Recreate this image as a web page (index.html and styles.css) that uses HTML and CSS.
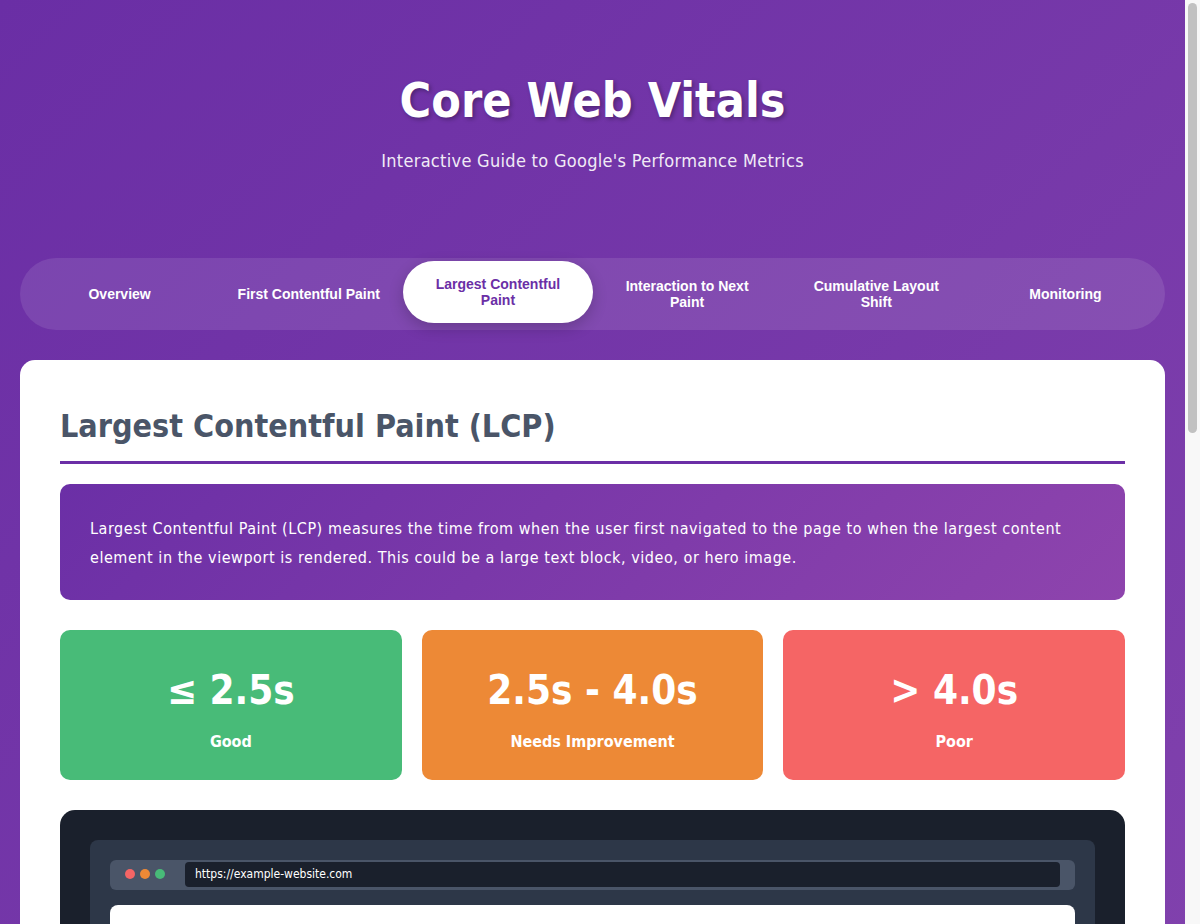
FILE: index.html
```html
<!DOCTYPE html>
<html lang="en">
  <head>
    <meta charset="UTF-8" />
    <meta name="viewport" content="width=device-width, initial-scale=1.0" />
    <title>Core Web Vitals</title>
    <link rel="stylesheet" href="styles.css">
  </head>
  <body>
    <div class="container">
      <header class="header">
        <h1>Core Web Vitals</h1>
        <p class="subtitle">Interactive Guide to Google's Performance Metrics</p>
      </header>

      <nav class="tabs">
        <button class="tab">Overview</button>
        <button class="tab">First Contentful Paint</button>
        <button class="tab active">Largest Contentful Paint</button>
        <button class="tab">Interaction to Next Paint</button>
        <button class="tab">Cumulative Layout Shift</button>
        <button class="tab">Monitoring</button>
      </nav>

      <main class="panel">
        <h2>Largest Contentful Paint (LCP)</h2>

        <div class="intro">
          Largest Contentful Paint (LCP) measures the time from when the user first navigated to the page to when the largest content
          element in the viewport is rendered. This could be a large text block, video, or hero image.
        </div>

        <div class="thresholds">
          <div class="threshold good">
            <div class="value">&le; 2.5s</div>
            <div class="label">Good</div>
          </div>
          <div class="threshold needs">
            <div class="value">2.5s - 4.0s</div>
            <div class="label">Needs Improvement</div>
          </div>
          <div class="threshold poor">
            <div class="value">&gt; 4.0s</div>
            <div class="label">Poor</div>
          </div>
        </div>

        <div class="demo">
          <div class="browser">
            <div class="browser-bar">
              <span class="dot red"></span>
              <span class="dot orange"></span>
              <span class="dot green"></span>
              <div class="url">https://example-website.com</div>
            </div>
            <div class="viewport">
              <div class="hero">Hero Image</div>
              <div class="line"></div>
              <div class="line short"></div>
            </div>
          </div>
        </div>
      </main>
    </div>
  </body>
</html>
```

FILE: styles.css
```css
* {
  box-sizing: border-box;
}

/* page scrollbar track */
html {
  background: #f8f8f8;
}

html::after {
  content: "";
  position: fixed;
  top: 3px;
  right: 3px;
  width: 9px;
  height: 430px;
  border-radius: 5px;
  background: #c1c1c1;
}

body {
  margin: 0 15px 0 0;
  font-family: Tahoma, "DejaVu Sans Condensed", Geneva, Verdana, sans-serif;
  background: linear-gradient(135deg, #6a2ea5 0%, #8444ae 100%);
  min-height: 100vh;
  color: #2d3748;
}

.container {
  max-width: 1200px;
  margin: 0 auto;
  padding: 20px;
}

.header {
  text-align: center;
  color: white;
  padding: 52px 0 47px;
  margin-bottom: 40px;
}

.header h1 {
  font-size: 48px;
  line-height: 1.2;
  margin: 0 0 20px;
  text-shadow: 2px 2px 4px rgba(0, 0, 0, 0.3);
}

.subtitle {
  font-size: 18px;
  line-height: 1.2;
  margin: 0;
  opacity: 0.9;
  letter-spacing: 0.3px;
}

.tabs {
  display: flex;
  padding: 5px;
  background: rgba(255, 255, 255, 0.1);
  border-radius: 36px;
  margin-bottom: 30px;
}

.tab {
  flex: 1;
  padding: 15px 20px;
  border: none;
  background: transparent;
  color: white;
  font-family: "Liberation Sans", Arial, sans-serif;
  font-size: 14px;
  font-weight: bold;
  line-height: 16px;
  border-radius: 31px;
  cursor: pointer;
}

.tab.active {
  background: white;
  color: #6b2fa6;
  transform: translateY(-2px);
  box-shadow: 0 5px 15px rgba(0, 0, 0, 0.2);
}

.panel {
  background: white;
  border-radius: 15px;
  padding: 40px;
}

.panel h2 {
  font-size: 32px;
  line-height: 1.2;
  color: #4a5568;
  margin: 7px 0 20px;
  padding-bottom: 15px;
  border-bottom: 3px solid #6b2fa6;
}

.intro {
  background: linear-gradient(135deg, #6b2fa6 0%, #8e44ad 100%);
  color: white;
  padding: 30px 30px 28px;
  border-radius: 10px;
  font-size: 16px;
  line-height: 29px;
  letter-spacing: 0.55px;
  margin-bottom: 30px;
}

.thresholds {
  display: grid;
  grid-template-columns: repeat(3, 1fr);
  gap: 20px;
  margin-bottom: 30px;
}

.threshold {
  color: white;
  text-align: center;
  padding: 30px 20px 28px;
  border-radius: 10px;
}

.threshold .value {
  font-size: 40px;
  font-weight: bold;
  line-height: 60px;
  margin-bottom: 12px;
}

.threshold .label {
  font-size: 16px;
  font-weight: bold;
  line-height: 20px;
}

.good {
  background: #48bb78;
}

.needs {
  background: #ed8936;
}

.poor {
  background: #f56565;
}

.demo {
  background: #1a202c;
  border-radius: 15px;
  padding: 30px;
}

.browser {
  background: #2d3748;
  border-radius: 8px;
  padding: 20px;
}

.browser-bar {
  display: flex;
  align-items: center;
  gap: 5px;
  background: #4a5568;
  border-radius: 6px;
  padding: 2px 15px 3px;
  margin-bottom: 15px;
}

.dot {
  width: 10px;
  height: 10px;
  border-radius: 50%;
}

.dot.red {
  background: #f56565;
}

.dot.orange {
  background: #ed8936;
}

.dot.green {
  background: #48bb78;
}

.url {
  flex: 1;
  margin-left: 15px;
  background: #1a202c;
  color: white;
  font-size: 12px;
  line-height: 15px;
  padding: 5px 10px;
  border-radius: 4px;
}

.viewport {
  background: white;
  border-radius: 8px;
  padding: 20px;
  min-height: 300px;
}

.hero {
  height: 180px;
  border-radius: 8px;
  background: linear-gradient(135deg, #e2e8f0, #cbd5e0);
  color: #718096;
  display: flex;
  align-items: center;
  justify-content: center;
  margin-bottom: 20px;
}

.line {
  height: 14px;
  background: #e2e8f0;
  border-radius: 4px;
  margin-bottom: 10px;
}

.line.short {
  width: 60%;
}
```
